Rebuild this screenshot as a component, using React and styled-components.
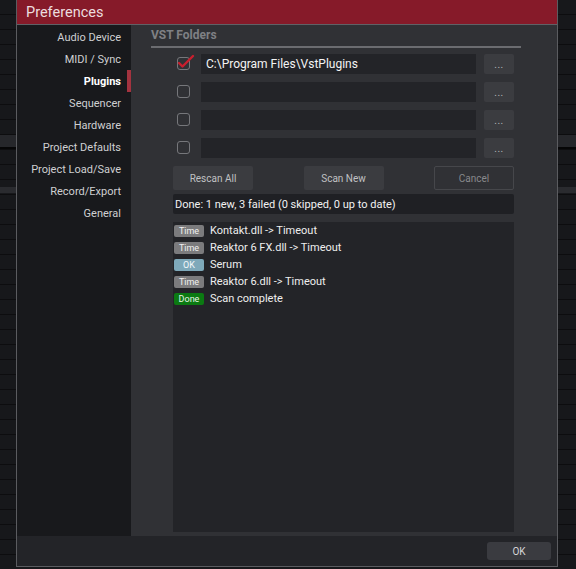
import React from "react";
import styled, { createGlobalStyle } from "styled-components";

const GlobalStyle = createGlobalStyle`
  html, body {
    margin: 0;
    padding: 0;
    background: #141518;
    font-family: Roboto, "Liberation Sans", sans-serif;
    -webkit-font-smoothing: antialiased;
  }
`;

const Stage = styled.div`
  position: relative;
  width: 576px;
  height: 569px;
  overflow: hidden;
  background-color: #17181b;
  background-image: repeating-linear-gradient(
    to bottom,
    transparent 0,
    transparent 14px,
    #0d0d0f 14px,
    #0d0d0f 15px
  );
`;

const BackBand = styled.div`
  height: ${(p) => p.h}px;
  margin-top: ${(p) => p.top}px;
  background: ${(p) => p.bg};
  border-bottom: ${(p) => (p.line ? "2px solid #060607" : "none")};
`;

const Dialog = styled.div`
  position: absolute;
  left: 16px;
  top: 0;
  width: 540px;
  height: 566px;
  border: 1px solid #5b5c60;
  border-top: none;
  display: flex;
  flex-direction: column;
  background: #303135;
`;

const TitleBar = styled.div`
  height: 24px;
  flex: none;
  background: #861a29;
  border-bottom: 1px solid #606166;
  display: flex;
  align-items: center;
  padding-left: 9px;
  font-size: 14.5px;
  color: #ecdcdf;
`;

const Body = styled.div`
  flex: 1;
  display: flex;
  min-height: 0;
`;

const Sidebar = styled.div`
  width: 114px;
  flex: none;
  background: #18191c;
  padding-top: 1px;
  display: flex;
  flex-direction: column;
`;

const NavItem = styled.div`
  position: relative;
  height: 22px;
  display: flex;
  align-items: center;
  justify-content: flex-end;
  padding-right: 10px;
  font-size: 11px;
  color: ${(p) => (p.active ? "#ffffff" : "#cfd0d2")};
  font-weight: ${(p) => (p.active ? 700 : 400)};

  &::after {
    content: "";
    display: ${(p) => (p.active ? "block" : "none")};
    position: absolute;
    right: 0;
    top: 0;
    width: 4px;
    height: 22px;
    background: #a3333f;
  }
`;

const Content = styled.div`
  flex: 1;
  display: flex;
  flex-direction: column;
  padding: 3px 0 4px 20px;
`;

const SectionHeader = styled.div`
  width: 370px;
  height: 20px;
  border-bottom: 2px solid #6b6c70;
  font-size: 12px;
  font-weight: 700;
  color: #7f8084;
  display: flex;
  align-items: center;
  box-sizing: border-box;
  padding-bottom: 4px;
`;

const Panel = styled.div`
  margin-left: 22px;
  width: 341px;
  flex: 1;
  display: flex;
  flex-direction: column;
`;

const Folders = styled.div`
  display: flex;
  flex-direction: column;
  gap: 8px;
  margin-top: 6px;
`;

const FolderRow = styled.div`
  display: flex;
  height: 20px;
`;

const CheckCell = styled.div`
  width: 28px;
  display: flex;
  align-items: center;
  padding-left: 4px;
  box-sizing: border-box;
  position: relative;
`;

const Box = styled.div`
  width: 11px;
  height: 11px;
  margin-top: -2px;
  border: 1.5px solid #76777b;
  border-radius: 3px;
`;

const Tick = styled.svg`
  position: absolute;
  left: 4px;
  top: 0;
`;

const PathField = styled.div`
  width: 275px;
  height: 20px;
  background: #232428;
  display: flex;
  align-items: center;
  padding-left: 5px;
  box-sizing: border-box;
  font-size: 12px;
  color: #f4f4f4;
`;

const BrowseButton = styled.div`
  width: 30px;
  height: 20px;
  margin-left: 8px;
  background: #3b3c40;
  border-radius: 2px;
  color: #b8b9bb;
  font-size: 10px;
  display: flex;
  align-items: center;
  justify-content: center;
  letter-spacing: 0.5px;
`;

const Actions = styled.div`
  display: flex;
  justify-content: space-between;
  margin-top: 8px;
`;

const ActionButton = styled.div`
  width: 80px;
  height: 24px;
  box-sizing: border-box;
  border-radius: 2px;
  background: ${(p) => (p.outline ? "transparent" : "#3b3c40")};
  border: ${(p) => (p.outline ? "1px solid #46474b" : "none")};
  color: ${(p) => (p.outline ? "#88898c" : "#c0c1c3")};
  font-size: 10px;
  display: flex;
  align-items: center;
  justify-content: center;
`;

const Status = styled.div`
  margin-top: 4px;
  height: 20px;
  background: #1f2024;
  border-radius: 2px;
  display: flex;
  align-items: center;
  padding-left: 2px;
  font-size: 11px;
  color: #f2f2f2;
`;

const Log = styled.div`
  margin-top: 8px;
  flex: 1;
  background: #232428;
  display: flex;
  flex-direction: column;
`;

const LogLine = styled.div`
  height: 17px;
  display: flex;
  align-items: center;
  font-size: 11px;
  color: #eeeeee;
`;

const Badge = styled.span`
  width: 30px;
  height: 12px;
  margin-left: 1px;
  margin-right: 6px;
  border-radius: 2px;
  background: ${(p) => p.bg};
  color: ${(p) => p.fg};
  font-size: 9px;
  display: flex;
  align-items: center;
  justify-content: center;
`;

const Footer = styled.div`
  height: 30px;
  flex: none;
  background: #232428;
  display: flex;
  align-items: center;
  justify-content: flex-end;
  padding-right: 6px;
`;

const OkButton = styled.div`
  width: 64px;
  height: 18px;
  background: #3a3b40;
  border-radius: 3px;
  color: #d6d6d8;
  font-size: 10px;
  display: flex;
  align-items: center;
  justify-content: center;
`;

const nav = [
  "Audio Device",
  "MIDI / Sync",
  "Plugins",
  "Sequencer",
  "Hardware",
  "Project Defaults",
  "Project Load/Save",
  "Record/Export",
  "General",
];

const folders = ["C:\\Program Files\\VstPlugins", "", "", ""];

const badges = {
  Time: { bg: "#7b7b7d", fg: "#f0f0f0" },
  OK: { bg: "#7ea9ba", fg: "#f4f8fa" },
  Done: { bg: "#0b7a12", fg: "#e8f5e8" },
};

const log = [
  ["Time", "Kontakt.dll -> Timeout"],
  ["Time", "Reaktor 6 FX.dll -> Timeout"],
  ["OK", "Serum"],
  ["Time", "Reaktor 6.dll -> Timeout"],
  ["Done", "Scan complete"],
];

export default function App() {
  return (
    <>
      <GlobalStyle />
      <Stage>
        <BackBand top={135} h={12} bg="#26272b" line />
        <BackBand top={38} h={6} bg="#2a2b2f" />
        <Dialog>
          <TitleBar>Preferences</TitleBar>
          <Body>
            <Sidebar>
              {nav.map((n) => (
                <NavItem key={n} active={n === "Plugins"}>
                  {n}
                </NavItem>
              ))}
            </Sidebar>
            <Content>
              <SectionHeader>VST Folders</SectionHeader>
              <Panel>
                <Folders>
                  {folders.map((f, i) => (
                    <FolderRow key={i}>
                      <CheckCell>
                        <Box />
                        {i === 0 && (
                          <Tick width="18" height="16" viewBox="0 0 18 16">
                            <path
                              d="M2 9 L5.5 12.5 L16 2"
                              fill="none"
                              stroke="#c91f2e"
                              strokeWidth="2.4"
                              strokeLinecap="round"
                              strokeLinejoin="round"
                            />
                          </Tick>
                        )}
                      </CheckCell>
                      <PathField>{f}</PathField>
                      <BrowseButton>...</BrowseButton>
                    </FolderRow>
                  ))}
                </Folders>
                <Actions>
                  <ActionButton>Rescan All</ActionButton>
                  <ActionButton>Scan New</ActionButton>
                  <ActionButton outline>Cancel</ActionButton>
                </Actions>
                <Status>Done: 1 new, 3 failed (0 skipped, 0 up to date)</Status>
                <Log>
                  {log.map(([b, t], i) => (
                    <LogLine key={i}>
                      <Badge bg={badges[b].bg} fg={badges[b].fg}>
                        {b}
                      </Badge>
                      {t}
                    </LogLine>
                  ))}
                </Log>
              </Panel>
            </Content>
          </Body>
          <Footer>
            <OkButton>OK</OkButton>
          </Footer>
        </Dialog>
      </Stage>
    </>
  );
}
